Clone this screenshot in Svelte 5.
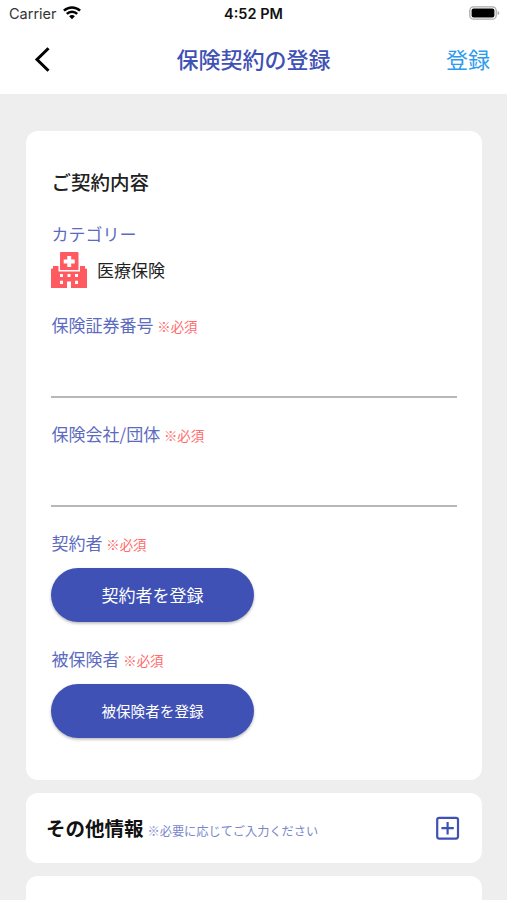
<script>
  const fields = [
    { label: '保険証券番号' },
    { label: '保険会社/団体' },
  ];
  const people = [
    { label: '契約者', action: '契約者を登録', small: false },
    { label: '被保険者', action: '被保険者を登録', small: true },
  ];
</script>

<div class="screen">
  <header>
    <div class="status">
      <div class="carrier">
        <span>Carrier</span>
        <svg width="18" height="14" viewBox="0 0 18 14" fill="none" stroke="#000" stroke-width="2.5">
          <path d="M.9 4.7C5.5.3 12.5.3 17.1 4.7" />
          <path d="M3.8 7.8C6.8 4.9 11.2 4.9 14.2 7.8" />
          <path d="M6.1 10.3C7.8 8.6 10.2 8.6 11.9 10.3L9 13.3Z" fill="#000" stroke="none" />
        </svg>
      </div>
      <div class="time">4:52 PM</div>
      <svg class="battery" width="31" height="14" viewBox="0 0 31 14">
        <rect x=".8" y=".8" width="26.4" height="12.4" rx="3.8" fill="#fff" stroke="#aaa" stroke-width="1.3" />
        <rect x="2.6" y="2.4" width="22.8" height="9.2" rx="2" fill="#000" />
        <path d="M28.6 4.8Q30.4 5.5 30.4 7T28.6 9.2Z" fill="#aaa" />
      </svg>
    </div>
    <nav>
      <svg class="back" width="16" height="25" viewBox="0 0 16 25" fill="none" stroke="#000" stroke-width="3">
        <path d="M14.5 1.2L3 12.5L14.5 23.8" />
      </svg>
      <h1>保険契約の登録</h1>
      <a class="save" href="#save">登録</a>
    </nav>
  </header>

  <main>
    <section class="card form">
      <h2>ご契約内容</h2>
      <div class="label">カテゴリー</div>
      <div class="category">
        <svg width="36" height="36" viewBox="0 0 36 36">
          <path fill="#ff5a5f" d="M10 0H26.5Q27.5 0 27.5 1V18H9V1Q9 0 10 0Z" />
          <path fill="#ff5a5f" d="M0 17.5Q0 16.5 1 16.5H2V14H7.5V19.5H29V14H34V16.5H35Q36 16.5 36 17.5V36H20V29.5H16V36H0Z" />
          <path fill="#fff" d="M16.3 4H20.2V7.6H23.8V11.5H20.2V15H16.3V11.5H12.7V7.6H16.3Z" />
          <path fill="#fff" d="M9 22H12V25H9ZM16.5 22H19.5V25H16.5ZM24 22H27V25H24ZM9 28.8H12V32H9ZM24 28.8H27V32H24Z" />
        </svg>
        <span>医療保険</span>
      </div>
      {#each fields as field}
        <div class="field">
          <div class="label">{field.label} <small>※必須</small></div>
          <div class="input"></div>
        </div>
      {/each}
      {#each people as person}
        <div class="person">
          <div class="label">{person.label} <small>※必須</small></div>
          <button class:small={person.small}>{person.action}</button>
        </div>
      {/each}
    </section>

    <section class="card other">
      <h2>その他情報</h2>
      <span class="note">※必要に応じてご入力ください</span>
      <svg width="24" height="24" viewBox="0 0 24 24" fill="none" stroke="#3f51b5" stroke-width="2.2">
        <rect x="1.2" y="1.8" width="20.8" height="20.8" rx="2" />
        <path d="M11.6 6V18.4M5.4 12.2H17.8" />
      </svg>
    </section>

    <section class="card next"></section>
  </main>
</div>

<style>
  :global(body) { margin: 0; }
  .screen {
    height: 900px;
    overflow: hidden;
    background: #eee;
    color: #212121;
    font-family: "Noto Sans CJK JP", sans-serif;
    box-sizing: border-box;
  }
  header { height: 94px; background: #fff; }
  .status {
    display: grid;
    grid-template-columns: 1fr auto 1fr;
    align-items: center;
    height: 27px;
    padding: 0 7px 0 9px;
    font: 14.5px/27px Inter, sans-serif;
    color: #111;
  }
  .carrier { display: flex; align-items: center; gap: 6px; color: #333; }
  .carrier svg { margin-top: -1px; }
  .time { font-weight: 600; margin-right: 2px; }
  .battery { justify-self: end; margin-top: -1px; }
  nav {
    display: grid;
    grid-template-columns: 1fr auto 1fr;
    align-items: center;
    height: 62px;
    padding: 0 17px 0 34px;
  }
  .back { margin-top: 2px; }
  h1 {
    margin: 0 17px 0 0;
    font-size: 22px;
    line-height: 32px;
    font-weight: 500;
    color: #3f51b5;
  }
  .save {
    justify-self: end;
    font-size: 22px;
    line-height: 32px;
    color: #2e9bee;
    text-decoration: none;
  }
  main {
    display: flex;
    flex-direction: column;
    gap: 13px;
    padding: 37px 25px 0 26px;
  }
  .card { background: #fff; border-radius: 12px; box-sizing: border-box; flex: none; }
  .form { height: 649px; padding: 36px 25px 0; }
  h2 { margin: 0; font-size: 19.5px; line-height: 30px; font-weight: 500; }
  .form h2 { margin-bottom: 24px; padding-left: .5px; }
  .label { padding-left: .5px; font-size: 17px; line-height: 26px; color: #5c6bc0; white-space: nowrap; }
  .label small { font-size: 13.4px; color: #ff6b6b; }
  .category {
    display: flex;
    align-items: center;
    gap: 10px;
    height: 36px;
    margin: 5px 0 24px;
    font-size: 17px;
  }
  .category span { margin-top: -1px; }
  .field { height: 109px; }
  .input { height: 57px; border-bottom: 2px solid #b8b8b8; }
  .person { height: 116px; }
  button {
    display: block;
    width: 203px;
    height: 54px;
    margin-top: 11px;
    padding: 0;
    border: 0;
    border-radius: 27px;
    background: #3f51b5;
    box-shadow: 0 1.5px 3px rgba(0, 0, 0, .28);
    color: #fff;
    font: 17px/54px "Noto Sans CJK JP", sans-serif;
  }
  button.small { font-size: 14.6px; }
  .other {
    display: flex;
    align-items: center;
    height: 70px;
    padding: 0 22px 0 20px;
  }
  .other h2 { color: #111; font-weight: 700; }
  .note { margin: 5px 0 0 4px; font-size: 12.2px; color: #7986cb; white-space: nowrap; }
  .other svg { margin-left: auto; }
  .next { height: 70px; }
</style>
